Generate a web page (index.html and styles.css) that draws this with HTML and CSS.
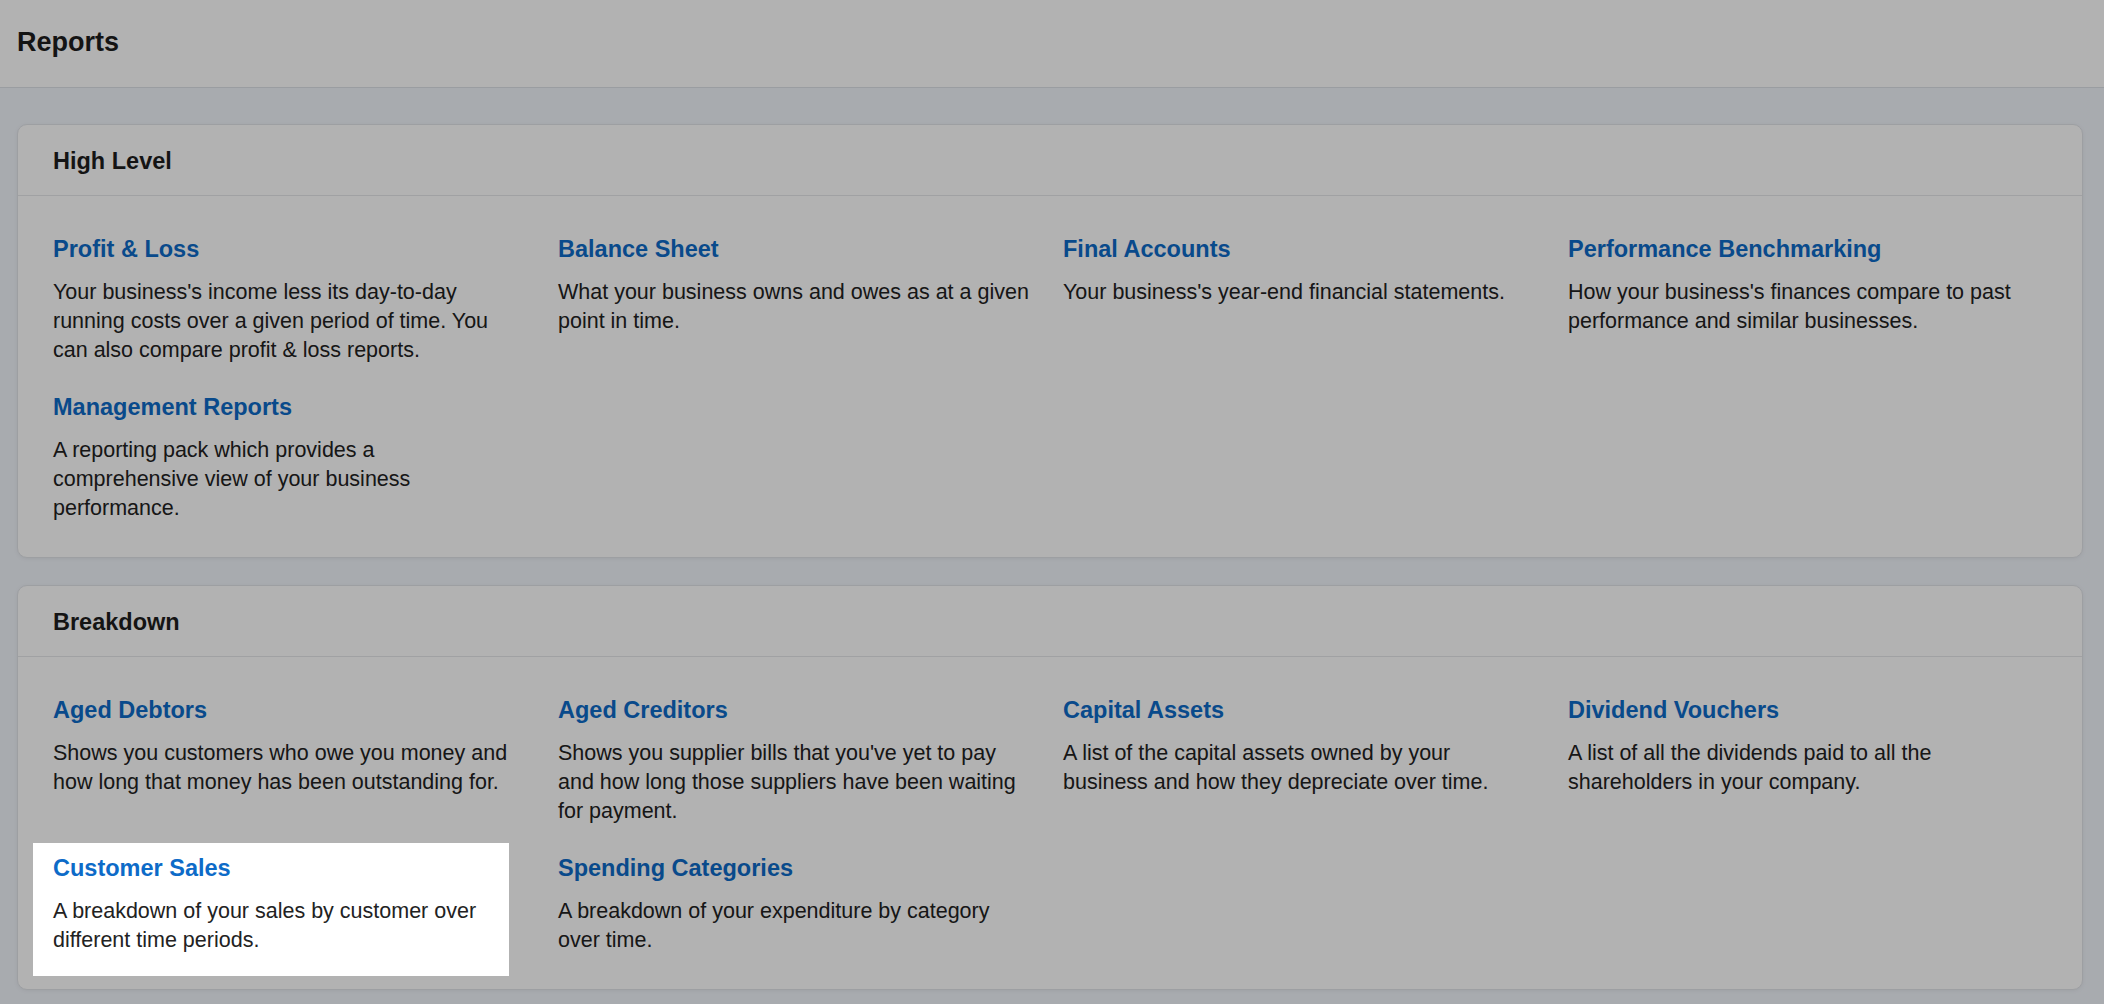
FILE: index.html
```html
<!DOCTYPE html>
<html lang="en">
<head>
<meta charset="utf-8">
<title>Reports</title>
<link rel="stylesheet" href="styles.css">
</head>
<body>
<header class="page-header">
  <h1 class="page-title">Reports</h1>
</header>
<main class="page-body">
  <section class="card">
    <h2 class="card-header">High Level</h2>
    <div class="card-body">
      <div class="report">
        <a class="report-title" href="#">Profit &amp; Loss</a>
        <p class="report-desc">Your business's income less its day-to-day running costs over a given period of time. You can also compare profit &amp; loss reports.</p>
      </div>
      <div class="report">
        <a class="report-title" href="#">Balance Sheet</a>
        <p class="report-desc">What your business owns and owes as at a given point in time.</p>
      </div>
      <div class="report">
        <a class="report-title" href="#">Final Accounts</a>
        <p class="report-desc">Your business's year-end financial statements.</p>
      </div>
      <div class="report">
        <a class="report-title" href="#">Performance Benchmarking</a>
        <p class="report-desc">How your business's finances compare to past performance and similar businesses.</p>
      </div>
      <div class="report">
        <a class="report-title" href="#">Management Reports</a>
        <p class="report-desc">A reporting pack which provides a comprehensive view of your business performance.</p>
      </div>
    </div>
  </section>
  <section class="card">
    <h2 class="card-header">Breakdown</h2>
    <div class="card-body">
      <div class="report">
        <a class="report-title" href="#">Aged Debtors</a>
        <p class="report-desc">Shows you customers who owe you money and how long that money has been outstanding for.</p>
      </div>
      <div class="report">
        <a class="report-title" href="#">Aged Creditors</a>
        <p class="report-desc">Shows you supplier bills that you've yet to pay and how long those suppliers have been waiting for payment.</p>
      </div>
      <div class="report">
        <a class="report-title" href="#">Capital Assets</a>
        <p class="report-desc">A list of the capital assets owned by your business and how they depreciate over time.</p>
      </div>
      <div class="report">
        <a class="report-title" href="#">Dividend Vouchers</a>
        <p class="report-desc">A list of all the dividends paid to all the shareholders in your company.</p>
      </div>
      <div class="report report-spotlight">
        <a class="report-title" href="#">Customer Sales</a>
        <p class="report-desc">A breakdown of your sales by customer over different time periods.</p>
      </div>
      <div class="report">
        <a class="report-title" href="#">Spending Categories</a>
        <p class="report-desc">A breakdown of your expenditure by category over time.</p>
      </div>
    </div>
  </section>
</main>
<div class="tour-overlay"></div>
</body>
</html>
```
FILE: styles.css
```css
* {
  box-sizing: border-box;
}

html, body {
  margin: 0;
  padding: 0;
}

body {
  font-family: "Liberation Sans", Arial, sans-serif;
  color: #222;
  background: #f1f5fb;
  min-height: 1004px;
}

.page-header {
  background: #fff;
  border-bottom: 1px solid #dde1e7;
  padding: 25px 17px 28px;
}

.page-title {
  margin: 0;
  font-size: 27px;
  line-height: 34px;
  font-weight: 700;
  color: #1d1d1d;
}

.page-body {
  display: flex;
  flex-direction: column;
  gap: 27px;
  padding: 36px 21px 0 17px;
}

.card {
  background: #fff;
  border: 1px solid #e1e4e9;
  border-radius: 10px;
  box-shadow: 0 1px 4px rgba(0, 0, 0, 0.06);
}

.card-header {
  margin: 0;
  padding: 21px 35px 19px;
  border-bottom: 1px solid #e5e7ea;
  font-size: 23.5px;
  line-height: 30px;
  font-weight: 700;
  color: #1d1d1d;
}

.card-body {
  display: grid;
  grid-template-columns: repeat(4, 472px);
  column-gap: 33px;
  row-gap: 27px;
  padding: 38px 35px 34px;
}

.report {
  display: flex;
  flex-direction: column;
  gap: 14px;
}

.report-title {
  font-size: 23.5px;
  line-height: 30px;
  font-weight: 700;
  color: #0d6bc8;
  text-decoration: none;
}

.report-desc {
  margin: 0;
  font-size: 21.5px;
  line-height: 29px;
  color: #222;
}

.tour-overlay {
  position: fixed;
  inset: 0;
  background: rgba(0, 0, 0, 0.3);
  z-index: 10;
}

.report-spotlight {
  position: relative;
  z-index: 11;
}

.report-spotlight::before {
  content: "";
  position: absolute;
  left: -20px;
  top: -10px;
  width: 476px;
  height: 133px;
  background: #fff;
  z-index: -1;
}
```
